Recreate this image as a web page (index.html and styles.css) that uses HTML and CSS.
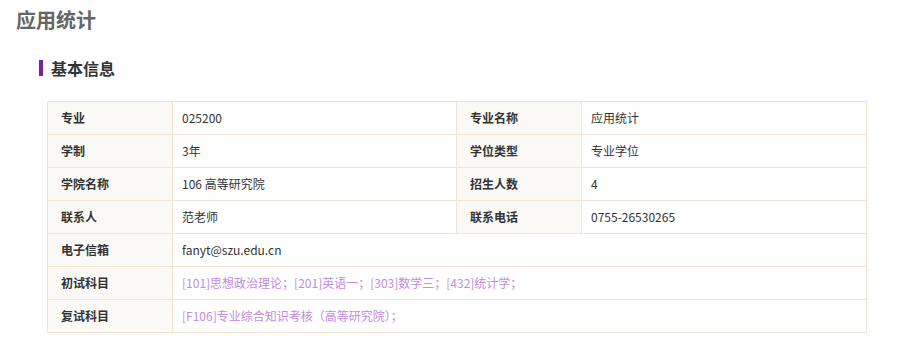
FILE: index.html
```html
<!DOCTYPE html>
<html lang="zh-CN">
<head>
<meta charset="utf-8">
<title>应用统计</title>
<link rel="stylesheet" href="styles.css">
</head>
<body>
<div class="page">
  <h1 class="title">应用统计</h1>
  <section class="section">
    <h2 class="section-title">基本信息</h2>
    <table class="info">
      <colgroup>
        <col class="c-label"><col class="c-value"><col class="c-label"><col class="c-value2">
      </colgroup>
      <tbody>
        <tr><th>专业</th><td>025200</td><th>专业名称</th><td>应用统计</td></tr>
        <tr><th>学制</th><td>3年</td><th>学位类型</th><td>专业学位</td></tr>
        <tr><th>学院名称</th><td>106 高等研究院</td><th>招生人数</th><td>4</td></tr>
        <tr><th>联系人</th><td>范老师</td><th>联系电话</th><td>0755-26530265</td></tr>
        <tr><th>电子信箱</th><td colspan="3">fanyt@szu.edu.cn</td></tr>
        <tr><th>初试科目</th><td colspan="3" class="link">[101]思想政治理论；[201]英语一；[303]数学三；[432]统计学；</td></tr>
        <tr><th>复试科目</th><td colspan="3" class="link">[F106]专业综合知识考核（高等研究院）；</td></tr>
      </tbody>
    </table>
  </section>
</div>
</body>
</html>
```

FILE: styles.css
```css
html, body {
  margin: 0;
  padding: 0;
  background: #ffffff;
}
body {
  font-family: "Noto Sans CJK SC", "Noto Sans", sans-serif;
  color: #333333;
}
.page {
  padding: 6px 0 0 16px;
}
.title {
  margin: 0;
  font-size: 20px;
  line-height: 28px;
  font-weight: bold;
  color: #666666;
}
.section {
  padding: 26px 0 0 23px;
}
.section-title {
  margin: 0;
  font-size: 16px;
  line-height: 22px;
  font-weight: bold;
  color: #333333;
  border-left: 4px solid #7b1fa2;
  padding-left: 8px;
  height: 16px;
  display: flex;
  align-items: center;
}
.info {
  margin: 25px 0 0 8px;
  width: 819px;
  table-layout: fixed;
  border-collapse: collapse;
  font-size: 12px;
}
.c-label { width: 125px; }
.c-value { width: 284px; }
.c-value2 { width: 285px; }
.info th, .info td {
  border: 1px solid #f3e3d3;
  height: 32px;
  padding: 0 0 0 9px;
  text-align: left;
  vertical-align: middle;
  line-height: 18px;
}
.info th {
  background: #fbf9f6;
  font-weight: bold;
  color: #333333;
  padding-left: 13px;
}
.info td {
  color: #333333;
}
.info td.link {
  color: #c18de0;
}
```
